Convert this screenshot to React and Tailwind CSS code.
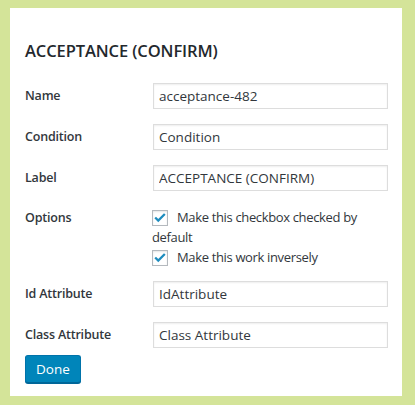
import { useState } from 'react';

const font = { fontFamily: '"Open Sans", "Noto Sans", sans-serif' };

function Field({ label, value }) {
  return (
    <div className="flex items-center">
      <div className="w-[128px] shrink-0 text-[12.5px] font-semibold tracking-[-0.2px] text-[#32373c]">{label}</div>
      <input
        className="h-[26px] w-[235px] border border-[#dddddd] bg-white px-[5px] text-[13.5px] text-[#32373c] shadow-[inset_0_1px_2px_rgba(0,0,0,0.07)] outline-none"
        defaultValue={value}
      />
    </div>
  );
}

function Check({ checked, onChange, children }) {
  return (
    <label className="block cursor-pointer text-[13px] leading-[20px] tracking-[-0.35px] text-[#32373c]" onClick={onChange}>
      <span className="mr-[9px] inline-flex h-4 w-4 items-center justify-center border border-[#b4b9be] bg-white align-[-3px] shadow-[inset_0_1px_2px_rgba(0,0,0,0.1)]">
        {checked && (
          <svg viewBox="0 0 16 16" className="h-[15px] w-[15px]">
            <path d="M2.5 8l3.5 3.5L13.5 4" fill="none" stroke="#1e8cbe" strokeWidth="2.6" />
          </svg>
        )}
      </span>
      {children}
    </label>
  );
}

export default function App() {
  const [opts, setOpts] = useState({ checked: true, inverse: true });

  return (
    <div className="h-[405px] w-[415px] bg-[#d4e499] pl-[10px] pt-[8px]" style={font}>
      <div className="h-[388px] w-[392px] bg-white pl-[15px] pr-[14px] pt-[31px]">
        <h2 className="text-[16.5px] font-semibold leading-[24px] tracking-[-0.1px] text-[#23282d]">ACCEPTANCE (CONFIRM)</h2>

        <div className="mt-[20px] flex flex-col gap-[15px]">
          <Field label="Name" value="acceptance-482" />
          <Field label="Condition" value="Condition" />
          <Field label="Label" value="ACCEPTANCE (CONFIRM)" />
        </div>

        {/* options block */}
        <div className="mt-[16px] flex">
          <div className="w-[127px] shrink-0 pt-[1px] text-[12.5px] font-semibold leading-[20px] tracking-[-0.2px] text-[#32373c]">
            Options
          </div>
          <div className="w-[236px]">
            <Check checked={opts.checked} onChange={() => setOpts({ ...opts, checked: !opts.checked })}>
              Make this checkbox checked by default
            </Check>
            <Check checked={opts.inverse} onChange={() => setOpts({ ...opts, inverse: !opts.inverse })}>
              Make this work inversely
            </Check>
          </div>
        </div>

        <div className="mt-[14px] flex flex-col gap-[15px]">
          <Field label="Id Attribute" value="IdAttribute" />
          <Field label="Class Attribute" value="Class Attribute" />
        </div>

        <button className="mt-[7px] block h-[28px] rounded-[3px] border border-[#0073aa] border-b-[#006799] bg-[#0085ba] px-[10px] text-[13.5px] text-white shadow-[0_1px_0_#006799]">
          Done
        </button>
      </div>
    </div>
  );
}
